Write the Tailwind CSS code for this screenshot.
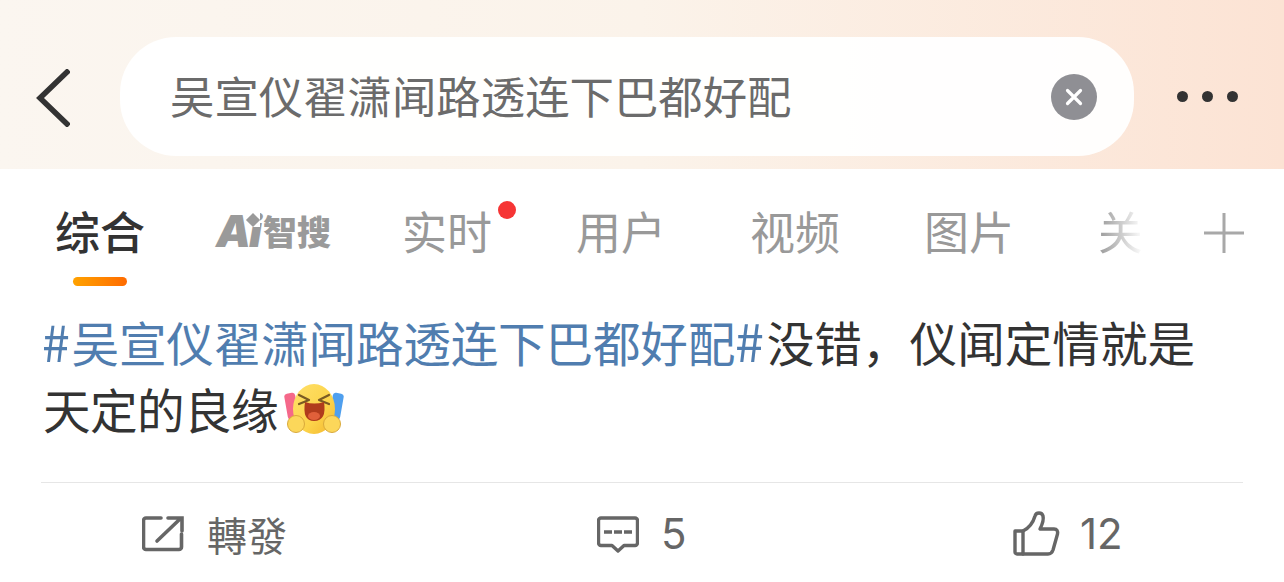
<!DOCTYPE html>
<html lang="zh-CN">
  <head>
    <meta charset="UTF-8" />
    <title>微博搜索</title>
    <script src="https://cdn.jsdelivr.net/npm/@tailwindcss/browser@4"></script>
  </head>
  <body class="bg-white font-['Noto_Sans_CJK_SC','Noto_Sans',sans-serif] w-[1284px] h-[582px] overflow-hidden">
    <!-- search header -->
    <header class="h-[169px] flex items-center pl-[36px] pt-[24px] bg-gradient-to-r from-[#fbf6f0] via-[#fbf3ea] to-[#fce3d4]">
      <svg class="w-[34px] h-[58px] mr-[50px] mt-[2px]" viewBox="0 0 34 58" fill="none">
        <path d="M31 3 L4 29 L31 55" stroke="#333" stroke-width="5.500" stroke-linecap="square" stroke-linejoin="miter" />
      </svg>
      <div class="w-[1014px] h-[119px] rounded-[56px] bg-white/95 flex items-center pl-[50px] pr-[37px] justify-between">
        <span class="text-[44.4px] leading-none text-[#6b6b6b] whitespace-nowrap -mt-[2px]">吴宣仪翟潇闻路透连下巴都好配</span>
        <span class="w-[46px] h-[46px] rounded-full bg-[#8f8f94] flex items-center justify-center">
          <svg class="w-[20px] h-[20px]" viewBox="0 0 20 20" fill="none">
            <path d="M3.5 3.5 L16.5 16.5 M16.5 3.5 L3.5 16.5" stroke="#fff" stroke-width="3.2" stroke-linecap="round" />
          </svg>
        </span>
      </div>
      <div class="flex gap-[14px] ml-[43px]">
        <span class="w-[11px] h-[11px] rounded-full bg-[#333]"></span>
        <span class="w-[11px] h-[11px] rounded-full bg-[#333]"></span>
        <span class="w-[11px] h-[11px] rounded-full bg-[#333]"></span>
      </div>
    </header>

    <!-- tabs -->
    <nav class="h-[121px] flex items-start pl-[55px] pt-[36px] text-[45px] leading-[52px] text-[#999] whitespace-nowrap">
      <div class="w-[90px] flex flex-col items-center mr-[71px]">
        <span class="font-medium text-[#333]">综合</span>
        <span class="mt-[20px] w-[54px] h-[9px] rounded-full bg-gradient-to-r from-[#ffa200] to-[#ff6a00]"></span>
      </div>
      <div class="relative w-[126px] mr-[60px] h-[52px] flex items-center font-black text-[#9a9a9a]">
        <span class="relative font-['Inter',sans-serif] italic text-[44px] tracking-[-2px] leading-none">Ai<span class="absolute right-[0px] top-[4px] w-[14px] h-[14px] bg-white flex items-center justify-center"><span class="w-[10px] h-[10px] rotate-45 bg-[#9a9a9a]"></span></span></span>
        <span class="text-[34px] leading-none ml-[3px]">智搜</span>
      </div>
      <div class="relative mr-[84px]">
        <span>实时</span>
        <span class="absolute left-[96px] top-[-4px] w-[18px] h-[18px] rounded-full bg-[#f63535]"></span>
      </div>
      <span class="mr-[84px]">用户</span>
      <span class="mr-[84px]">视频</span>
      <span class="mr-[84px]">图片</span>
      <span class="w-[45px] bg-gradient-to-r from-[#999] to-[#fff] bg-clip-text text-transparent">关</span>
      <svg class="w-[40px] h-[40px] ml-[61px] mt-[8px]" viewBox="0 0 40 40" fill="none">
        <path d="M20 0 V40 M0 20 H40" stroke="#a8a8a8" stroke-width="3" />
      </svg>
    </nav>

    <!-- post -->
    <article class="px-[41px]">
      <p class="text-[47.6px] leading-[67px] text-[#333] h-[192px] pl-[2px] pt-[16px] w-[1202px]">
        <span class="text-[#507daf] tracking-[-0.2px]"><span class="text-[50px] -ml-[1px] mr-[2px]">#</span>吴宣仪翟潇闻路透连下巴都好配<span class="text-[52px] mr-[3px]">#</span></span>没错<span class="font-['Noto_Sans_CJK_TC',sans-serif]">，</span>仪闻定情就是<br /><span class="tracking-[-0.6px]">天定的良缘</span><svg class="inline-block w-[60px] h-[54px] ml-[6px] align-[-8px]" viewBox="0 0 60 54">
          <defs>
            <linearGradient id="face" x1="0" y1="0" x2="1" y2="1">
              <stop offset="0" stop-color="#ffe06a" />
              <stop offset="0.6" stop-color="#fcd44a" />
              <stop offset="1" stop-color="#f3b52e" />
            </linearGradient>
          </defs>
          <rect x="2" y="10" width="11" height="26" rx="3" transform="rotate(-10 8 23)" fill="#f5688a" />
          <rect x="47" y="10" width="11" height="26" rx="3" transform="rotate(10 52 23)" fill="#4f9fee" />
          <ellipse cx="30" cy="26" rx="21" ry="25" fill="url(#face)" />
          <path d="M15 12 L25 17 L15 21 M45 12 L35 17 L45 21" fill="none" stroke="#7a5a24" stroke-width="2.200" stroke-linecap="round" stroke-linejoin="round" />
          <path d="M21 19 Q30 22 40 19 Q43 38 30 38 Q18 38 21 19 Z" fill="#b03c1c" />
          <ellipse cx="30" cy="33" rx="6" ry="4" fill="#e0603a" />
          <circle cx="12" cy="41" r="8.500" fill="#fcd75a" stroke="#d9a93a" stroke-width="1" />
          <circle cx="48" cy="41" r="8.500" fill="#fcd75a" stroke="#d9a93a" stroke-width="1" />
        </svg>
      </p>
      <div class="border-t border-[#e6e6e6]"></div>
    </article>

    <!-- actions -->
    <footer class="h-[99px] relative flex items-center text-[40px] leading-none text-[#666] pt-[3px]">
      <div class="w-[1284px] flex">
        <div class="flex items-center gap-[21px] pl-[142px] w-[596px]">
          <svg class="w-[44px] h-[36px]" viewBox="0 0 44 36" fill="none" stroke="#666" stroke-width="3.6">
            <path d="M19 2 H4 a2.5 2.5 0 0 0 -2.5 2.5 V31 a2.5 2.5 0 0 0 2.5 2.5 H37 a2.5 2.5 0 0 0 2.5 -2.5 V18" stroke-linecap="round" />
            <path d="M15 25 L38 3 M26 2 H40 V15" stroke-linecap="round" />
          </svg>
          <span>轉發</span>
        </div>
        <div class="flex items-center gap-[23px] w-[416px] text-[42px]">
          <svg class="w-[42px] h-[38px] mt-[2px] ml-[1px]" viewBox="0 0 42 38" fill="none" stroke="#666">
            <path d="M4 2 H38 a2.5 2.5 0 0 1 2.5 2.5 V27 a2.5 2.5 0 0 1 -2.5 2.5 H27 L21 35 L15 29.500 H4 a2.500 2.500 0 0 1 -2.500 -2.500 V4.500 a2.500 2.500 0 0 1 2.500 -2.500 Z" stroke-width="3.4" stroke-linejoin="round" />
            <path d="M7 16 H15 M17 16 H25 M27 16 H35" stroke-width="3.4" />
          </svg>
          <span class="font-['Inter',sans-serif] -ml-[1px]">5</span>
        </div>
        <div class="flex items-center gap-[20px] text-[42px]">
          <svg class="w-[48px] h-[46px]" viewBox="0 0 48 46" fill="none" stroke="#666" stroke-width="3.4" stroke-linejoin="round" stroke-linecap="round">
            <path d="M3 20 H11 V43 H5 a2 2 0 0 1 -2 -2 Z" />
            <path d="M11 20 C17 17 21 12 23 5 C24 1 30 1 31 5 C32 9 30 14 28 18 H42 C45 18 46 20 45.500 23 L41 39 C40 42 39 43 36 43 H11" />
          </svg>
          <span class="font-['Inter',sans-serif]">12</span>
        </div>
      </div>
    </footer>
  </body>
</html>
